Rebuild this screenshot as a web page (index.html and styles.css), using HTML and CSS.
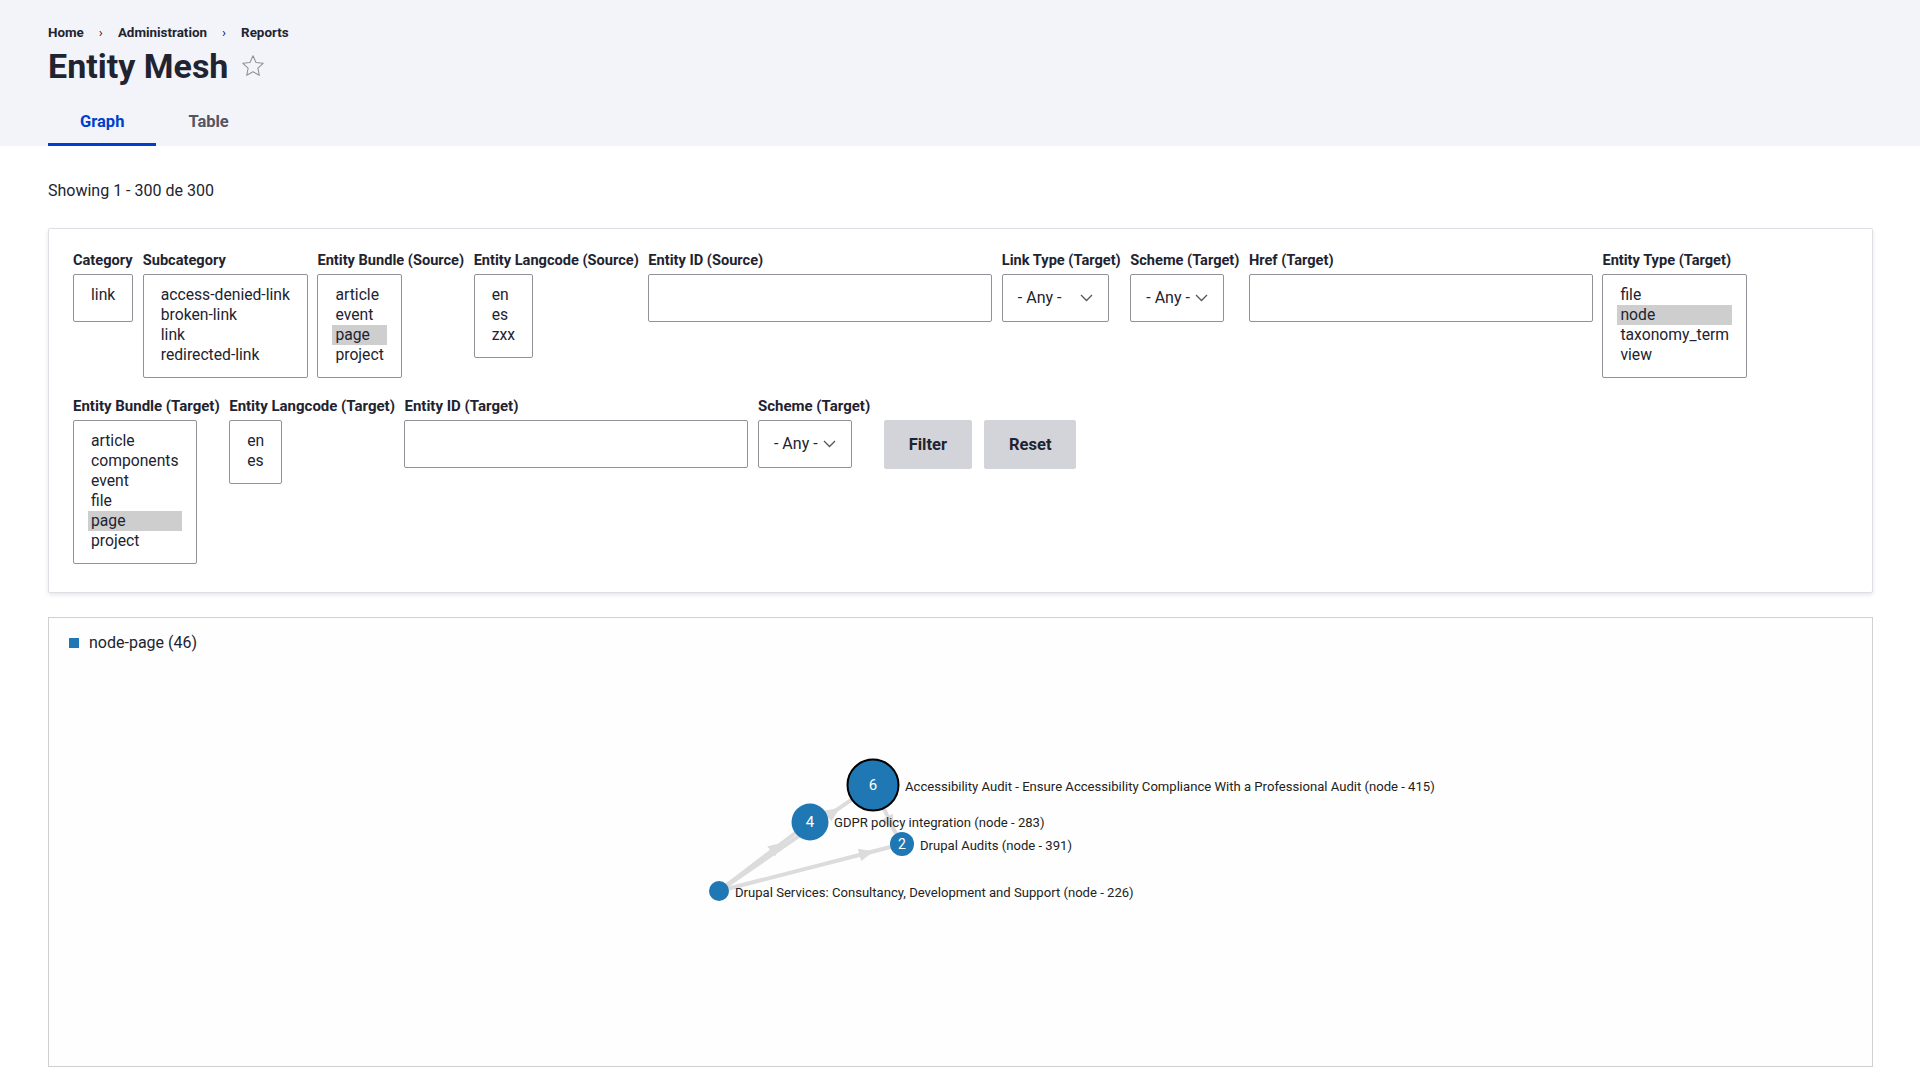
FILE: index.html
```html
<!DOCTYPE html>
<html lang="en">
<head>
    <meta charset="UTF-8">
    <meta name="viewport" content="width=device-width, initial-scale=1.0">
    <title>Entity Mesh | Reports</title>
    <link rel="stylesheet" href="styles.css">
</head>
<body>
    <header class="page-header">
        <nav class="breadcrumb">
            <a href="#">Home</a>
            <span class="sep">›</span>
            <a href="#">Administration</a>
            <span class="sep">›</span>
            <a href="#">Reports</a>
        </nav>
        <h1 class="page-title">
            Entity Mesh
            <a href="#" class="shortcut" title="Add to Default shortcuts">
                <svg width="26" height="26" viewBox="0 0 24 24"><path d="M12 2.6l2.8 6.1 6.6.8-4.9 4.5 1.3 6.6L12 17.3l-5.8 3.3 1.3-6.6-4.9-4.5 6.6-.8z" fill="none" stroke="#8e929c" stroke-width="1" stroke-linejoin="round"/></svg>
            </a>
        </h1>
        <ul class="tabs">
            <li class="is-active"><a href="#">Graph</a></li>
            <li><a href="#">Table</a></li>
        </ul>
    </header>

    <main class="content">
        <p class="summary">Showing 1 - 300 de 300</p>

        <form class="exposed-form">
            <div class="form-row">
                <div class="form-item">
                    <label>Category</label>
                    <div class="listbox">
                        <div class="opt">link</div>
                    </div>
                </div>
                <div class="form-item">
                    <label>Subcategory</label>
                    <div class="listbox">
                        <div class="opt">access-denied-link</div>
                        <div class="opt">broken-link</div>
                        <div class="opt">link</div>
                        <div class="opt">redirected-link</div>
                    </div>
                </div>
                <div class="form-item">
                    <label>Entity Bundle (Source)</label>
                    <div class="listbox">
                        <div class="opt">article</div>
                        <div class="opt">event</div>
                        <div class="opt is-selected">page</div>
                        <div class="opt">project</div>
                    </div>
                </div>
                <div class="form-item">
                    <label>Entity Langcode (Source)</label>
                    <div class="listbox">
                        <div class="opt">en</div>
                        <div class="opt">es</div>
                        <div class="opt">zxx</div>
                    </div>
                </div>
                <div class="form-item">
                    <label>Entity ID (Source)</label>
                    <input type="text" class="form-input">
                </div>
                <div class="form-item">
                    <label>Link Type (Target)</label>
                    <div class="form-select form-select--wide">
                        <span>- Any -</span>
                        <svg width="13" height="8" viewBox="0 0 13 8"><path d="M1 1l5.5 5.5L12 1" fill="none" stroke="#545560" stroke-width="1.3"/></svg>
                    </div>
                </div>
                <div class="form-item">
                    <label>Scheme (Target)</label>
                    <div class="form-select">
                        <span>- Any -</span>
                        <svg width="13" height="8" viewBox="0 0 13 8"><path d="M1 1l5.5 5.5L12 1" fill="none" stroke="#545560" stroke-width="1.3"/></svg>
                    </div>
                </div>
                <div class="form-item">
                    <label>Href (Target)</label>
                    <input type="text" class="form-input">
                </div>
                <div class="form-item">
                    <label>Entity Type (Target)</label>
                    <div class="listbox">
                        <div class="opt">file</div>
                        <div class="opt is-selected">node</div>
                        <div class="opt">taxonomy_term</div>
                        <div class="opt">view</div>
                    </div>
                </div>
            </div>

            <div class="form-row form-row--target">
                <div class="form-item">
                    <label>Entity Bundle (Target)</label>
                    <div class="listbox">
                        <div class="opt">article</div>
                        <div class="opt">components</div>
                        <div class="opt">event</div>
                        <div class="opt">file</div>
                        <div class="opt is-selected">page</div>
                        <div class="opt">project</div>
                    </div>
                </div>
                <div class="form-item">
                    <label>Entity Langcode (Target)</label>
                    <div class="listbox">
                        <div class="opt">en</div>
                        <div class="opt">es</div>
                    </div>
                </div>
                <div class="form-item">
                    <label>Entity ID (Target)</label>
                    <input type="text" class="form-input">
                </div>
                <div class="form-item">
                    <label>Scheme (Target)</label>
                    <div class="form-select">
                        <span>- Any -</span>
                        <svg width="13" height="8" viewBox="0 0 13 8"><path d="M1 1l5.5 5.5L12 1" fill="none" stroke="#545560" stroke-width="1.3"/></svg>
                    </div>
                </div>
                <div class="form-actions">
                    <button type="button" class="button">Filter</button>
                    <button type="button" class="button">Reset</button>
                </div>
            </div>
        </form>

        <section class="graph">
            <div class="legend">
                <span class="legend-swatch"></span>
                <span>node-page (46)</span>
            </div>

            <svg class="graph-canvas">
                <defs>
                    <marker id="arrow" viewBox="0 -7 15 14" refX="15" refY="0" markerWidth="15" markerHeight="14" markerUnits="userSpaceOnUse" orient="auto">
                        <path d="M0,-6.5L15,0L0,6.5Z" fill="#dcdcdc"/>
                    </marker>
                </defs>

                <!-- links: source -> arrow tip -> target -->
                <g class="links">
                    <path d="M670,273 L791,189.7 L824,167" marker-mid="url(#arrow)"/>
                    <path d="M670,273 L733.9,224.5 L761,204" marker-mid="url(#arrow)"/>
                    <path d="M670,273 L824.9,233.2 L853,226" marker-mid="url(#arrow)"/>
                    <path d="M824,167 L845,212 L853,226" marker-mid="url(#arrow)"/>
                </g>

                <g class="nodes">
                    <circle cx="670" cy="273" r="10"/>
                    <circle cx="761" cy="204" r="18.5"/>
                    <circle cx="853" cy="226" r="12"/>
                    <circle cx="824" cy="167" r="25.5" class="is-focus"/>
                </g>

                <g class="counts">
                    <text x="761" y="204" font-size="15">4</text>
                    <text x="853" y="226" font-size="14">2</text>
                    <text x="824" y="167" font-size="15">6</text>
                </g>

                <g class="labels">
                    <text x="856" y="168">Accessibility Audit - Ensure Accessibility Compliance With a Professional Audit (node - 415)</text>
                    <text x="785" y="204">GDPR policy integration (node - 283)</text>
                    <text x="871" y="227">Drupal Audits (node - 391)</text>
                    <text x="686" y="274">Drupal Services: Consultancy, Development and Support (node - 226)</text>
                </g>
            </svg>
        </section>
    </main>
</body>
</html>
```

FILE: styles.css
```css
* {
    box-sizing: border-box;
}
body {
    margin: 0;
    font-family: Roboto, "Noto Sans", sans-serif;
    font-size: 16px;
    color: #222330;
    background: #fff;
}
a {
    color: inherit;
    text-decoration: none;
}

/* header */
.page-header {
    background: #f3f4f9;
    padding: 24px 48px 0;
}
.breadcrumb {
    display: flex;
    align-items: center;
    font-size: 13.4px;
    font-weight: 700;
    line-height: 18px;
}
.breadcrumb .sep {
    margin: 0 15px;
    font-weight: 400;
}
.page-title {
    display: flex;
    align-items: center;
    gap: 12px;
    margin: 4px 0 0;
    font-size: 34px;
    line-height: 40px;
    font-weight: 700;
}
.shortcut svg {
    display: block;
}
.tabs {
    display: flex;
    list-style: none;
    margin: 12px 0 0;
    padding: 0;
}
.tabs a {
    display: block;
    padding: 12px 32px;
    line-height: 24px;
    font-size: 16.5px;
    font-weight: 700;
    color: #545560;
}
.tabs .is-active a {
    color: #003ecc;
    box-shadow: inset 0 -3px 0 #003ecc;
}

/* content */
.content {
    padding: 0 47px 0 48px;
}
.summary {
    margin: 33px 0 25px;
    line-height: 24px;
}

/* exposed filters */
.exposed-form {
    background: #fff;
    border: 1px solid #dedfe4;
    border-radius: 2px;
    box-shadow: 0 2px 4px rgba(0, 0, 0, 0.1);
    padding: 22px 24px 28px;
}
.form-row {
    display: flex;
    align-items: flex-start;
    gap: 9.5px;
}
.form-row + .form-row {
    margin-top: 19px;
}
.form-item {
    display: flex;
    flex-direction: column;
    align-items: flex-start;
}
.form-item label {
    display: block;
    font-size: 14.6px;
    font-weight: 700;
    line-height: 18px;
    margin-bottom: 5px;
    white-space: nowrap;
}
.form-row--target .form-item label {
    font-size: 15px;
}
.listbox {
    min-height: 48px;
    padding: 10px 14px 12px;
    border: 1px solid #919297;
    border-radius: 2px;
    background: #fff;
}
.listbox .opt {
    padding: 0 3px;
    font-size: 15.7px;
    line-height: 20px;
    white-space: nowrap;
}
.listbox .opt.is-selected {
    background: #cecece;
}
.form-input {
    width: 344px;
    height: 48px;
    border: 1px solid #919297;
    border-radius: 2px;
    background: #fff;
    font: inherit;
}
.form-select {
    display: flex;
    align-items: center;
    justify-content: space-between;
    width: 94px;
    height: 48px;
    padding: 0 15px;
    border: 1px solid #919297;
    border-radius: 2px;
    background: #fff;
    line-height: 24px;
}
.form-select--wide {
    width: 107px;
}
.form-actions {
    display: flex;
    gap: 12px;
    margin: 23px 0 0 4px;
}
.button {
    height: 49px;
    padding: 0 24px;
    border: 1px solid #d3d4d9;
    border-radius: 2px;
    background: #d3d4d9;
    color: #222330;
    font: inherit;
    font-size: 16.5px;
    font-weight: 700;
    cursor: pointer;
}

/* graph */
.graph {
    position: relative;
    height: 450px;
    margin-top: 24px;
    border: 1px solid #d0d0d0;
    background: #fefefe;
}
.legend {
    display: flex;
    align-items: center;
    gap: 10px;
    padding: 15px 20px;
    line-height: 20px;
}
.legend-swatch {
    width: 10px;
    height: 10px;
    background: #1f77b4;
}
.graph-canvas {
    position: absolute;
    top: 0;
    left: 0;
    width: 100%;
    height: 100%;
    font-family: Roboto, "Noto Sans", sans-serif;
}
.links path {
    fill: none;
    stroke: #dcdcdc;
    stroke-width: 4;
}
.nodes circle {
    fill: #1f77b4;
}
.nodes circle.is-focus {
    stroke: #000;
    stroke-width: 2;
}
.counts text {
    fill: #fff;
    text-anchor: middle;
    dominant-baseline: central;
}
.labels text {
    fill: #222;
    font-size: 13.1px;
    dominant-baseline: central;
}
```
